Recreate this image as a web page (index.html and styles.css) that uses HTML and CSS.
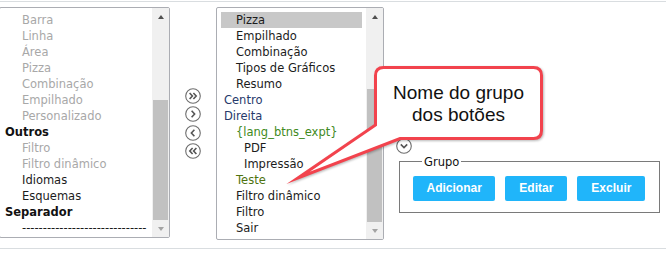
FILE: index.html
```
<!DOCTYPE html>
<html lang="pt">
<head>
    <meta charset="UTF-8">
    <meta name="viewport" content="width=device-width, initial-scale=1.0">
    <title>Botões da barra</title>
    <link rel="stylesheet" href="styles.css">
</head>
<body>
    <div class="panel">
        <div class="row">
            <!-- lista de botões disponíveis -->
            <div class="listbox listbox-left">
                <ul class="items">
                    <li class="lvl1 muted">Barra</li>
                    <li class="lvl1 muted">Linha</li>
                    <li class="lvl1 muted">Área</li>
                    <li class="lvl1 muted">Pizza</li>
                    <li class="lvl1 muted">Combinação</li>
                    <li class="lvl1 muted">Empilhado</li>
                    <li class="lvl1 muted">Personalizado</li>
                    <li class="lvl0 head">Outros</li>
                    <li class="lvl1 muted">Filtro</li>
                    <li class="lvl1 muted">Filtro dinâmico</li>
                    <li class="lvl1">Idiomas</li>
                    <li class="lvl1">Esquemas</li>
                    <li class="lvl0 head">Separador</li>
                    <li class="lvl1">------------------------------</li>
                </ul>
                <div class="scrollbar">
                    <span class="sb-btn up"></span>
                    <div class="sb-track"><div class="sb-thumb"></div></div>
                    <span class="sb-btn down"></span>
                </div>
            </div>

            <!-- mover itens -->
            <div class="movers">
                <button class="circle" title="Adicionar todos">
                    <svg viewBox="0 0 16 16"><circle cx="8" cy="8" r="7.3"/><path d="M4.6 5 L7.4 8 L4.6 11 M8.4 5 L11.2 8 L8.4 11"/></svg>
                </button>
                <button class="circle" title="Adicionar">
                    <svg viewBox="0 0 16 16"><circle cx="8" cy="8" r="7.3"/><path d="M6.6 4.8 L9.6 8 L6.6 11.2"/></svg>
                </button>
                <button class="circle" title="Remover">
                    <svg viewBox="0 0 16 16"><circle cx="8" cy="8" r="7.3"/><path d="M9.4 4.8 L6.4 8 L9.4 11.2"/></svg>
                </button>
                <button class="circle" title="Remover todos">
                    <svg viewBox="0 0 16 16"><circle cx="8" cy="8" r="7.3"/><path d="M11.4 5 L8.6 8 L11.4 11 M7.6 5 L4.8 8 L7.6 11"/></svg>
                </button>
            </div>

            <!-- botões selecionados -->
            <div class="listbox listbox-right">
                <ul class="items">
                    <li class="lvl1 selected">Pizza</li>
                    <li class="lvl1">Empilhado</li>
                    <li class="lvl1">Combinação</li>
                    <li class="lvl1">Tipos de Gráficos</li>
                    <li class="lvl1">Resumo</li>
                    <li class="lvl0 place">Centro</li>
                    <li class="lvl0 place">Direita</li>
                    <li class="lvl1 group-name">{lang_btns_expt}</li>
                    <li class="lvl2">PDF</li>
                    <li class="lvl2">Impressão</li>
                    <li class="lvl1 custom">Teste</li>
                    <li class="lvl1">Filtro dinâmico</li>
                    <li class="lvl1">Filtro</li>
                    <li class="lvl1">Sair</li>
                </ul>
                <div class="scrollbar">
                    <span class="sb-btn up"></span>
                    <div class="sb-track"><div class="sb-thumb"></div></div>
                    <span class="sb-btn down"></span>
                </div>
            </div>

            <div class="side">
                <div class="order">
                    <button class="circle" title="Subir">
                        <svg viewBox="0 0 16 16"><circle cx="8" cy="8" r="7.3"/><path d="M4.8 9.6 L8 6.4 L11.2 9.6"/></svg>
                    </button>
                    <button class="circle" title="Descer">
                        <svg viewBox="0 0 16 16"><circle cx="8" cy="8" r="7.3"/><path d="M4.8 6.4 L8 9.6 L11.2 6.4"/></svg>
                    </button>
                </div>
                <fieldset class="group">
                    <legend>Grupo</legend>
                    <button class="btn">Adicionar</button>
                    <button class="btn">Editar</button>
                    <button class="btn">Excluir</button>
                </fieldset>
            </div>
        </div>
    </div>

    <!-- balão de explicação -->
    <div class="callout">
        <svg class="callout-shape" viewBox="290 60 260 125" width="260" height="125">
            <path d="M383.5 67.5 H533.5 Q541.5 67.5 541.5 75.5 V130.5 Q541.5 138.5 533.5 138.5 H400 L298 178 L375.5 125 V75.5 Q375.5 67.5 383.5 67.5 Z"/>
        </svg>
        <div class="callout-text">Nome do grupo<br>dos botões</div>
    </div>
</body>
</html>
```

FILE: styles.css
```
body{
    margin: 0;
    font-family: "DejaVu Sans", Verdana, sans-serif;
    font-size: 11.5px;
    color: #1c1c1c;
    background: #fff;
}
.panel{
    margin-top: 1px;
    border-top: 1px solid #d9dde0;
    border-bottom: 1px solid #d9dde0;
    padding: 5px 0 8px 0;
}
.row{
    display: flex;
    align-items: flex-start;
}

/* caixas de lista */
.listbox{
    display: flex;
    border: 1px solid #abadb3;
    border-radius: 2px;
    background: #fff;
    overflow: hidden;
}
.listbox-left{
    width: 169px;
    height: 229px;
    margin-left: -1px;
}
.listbox-right{
    width: 166px;
    height: 231px;
    margin-left: 15px;
}
.items{
    flex: 1;
    list-style: none;
    margin: 0;
    padding: 4px 4px 0 0;
    line-height: 16px;
    white-space: nowrap;
    overflow: hidden;
}
.listbox-right .items{
    padding-left: 4px;
}
.items li{
    height: 16px;
}
.listbox-left .lvl0{ padding-left: 5px; }
.listbox-left .lvl1{ padding-left: 22px; }
.listbox-right .lvl0{ padding-left: 3px; }
.listbox-right .lvl1{ padding-left: 15px; }
.listbox-right .lvl2{ padding-left: 23px; }
.muted{ color: #a8a8a8; }
.head{
    font-weight: bold;
    color: #111;
}
.selected{ background: #c8c8c8; }
.place{ color: #27396b; }
.group-name{ color: #3f8a22; }
.custom{ color: #4f730f; }

/* barra de rolagem */
.scrollbar{
    width: 17px;
    display: flex;
    flex-direction: column;
    background: #f0f0f0;
}
.sb-btn{
    height: 17px;
    display: flex;
    align-items: center;
    justify-content: center;
}
.sb-btn::before{
    content: "";
    border-left: 3.5px solid transparent;
    border-right: 3.5px solid transparent;
}
.sb-btn.up::before{ border-bottom: 4px solid #505050; }
.sb-btn.down::before{ border-top: 4px solid #a3a3a3; }
.sb-track{
    flex: 1;
    display: flex;
    flex-direction: column;
    padding: 0 1px;
}
.sb-thumb{
    flex: 1;
    background: #c1c1c1;
}
.listbox-left .sb-thumb{ margin-top: 75px; }
.listbox-right .sb-thumb{ margin-top: 64px; }

/* botões redondos */
.movers{
    align-self: center;
    display: flex;
    flex-direction: column;
    gap: 2.5px;
    margin-left: 15px;
}
.circle{
    width: 16px;
    height: 16px;
    padding: 0;
    border: 0;
    background: none;
    display: block;
}
.circle svg{
    width: 16px;
    height: 16px;
    display: block;
    fill: none;
    stroke: #6e6e6e;
    stroke-width: 1.1;
}
.circle svg path{
    stroke: #555;
    stroke-width: 1.6;
}

/* grupo */
.side{
    margin-left: 12px;
    padding-top: 112px;
}
.order{
    display: flex;
    flex-direction: column;
    gap: 2.5px;
}
.group{
    margin: 1px 0 0 3px;
    width: 233px;
    border: 1px solid #7a7a7a;
    padding: 7px 13px 11px 13px;
    display: flex;
    gap: 10px;
}
.group legend{
    padding: 0 2px;
    margin-left: 9px;
    line-height: 14px;
    color: #111;
}
.btn{
    height: 25px;
    padding: 0 14px;
    border: 0;
    border-radius: 2px;
    background: #20b5fa;
    color: #fff;
    font-family: "Liberation Sans", Arial, sans-serif;
    font-weight: bold;
    font-size: 12px;
}
.group .btn:first-of-type{ padding: 0 13.5px; }

/* balão */
.callout{
    position: absolute;
    left: 374px;
    top: 66px;
    width: 169px;
    height: 74px;
}
.callout-shape{
    position: absolute;
    left: -84px;
    top: -6px;
    overflow: visible;
    filter: drop-shadow(1px 1px 1px rgba(0,0,0,0.28));
}
.callout-shape path{
    fill: #fff;
    stroke: #f2434d;
    stroke-width: 3;
    stroke-linejoin: miter;
    stroke-miterlimit: 12;
}
.callout-text{
    position: relative;
    padding-top: 16px;
    text-align: center;
    font-family: "Liberation Sans", Arial, sans-serif;
    font-size: 19px;
    line-height: 22px;
    color: #111;
}
```
